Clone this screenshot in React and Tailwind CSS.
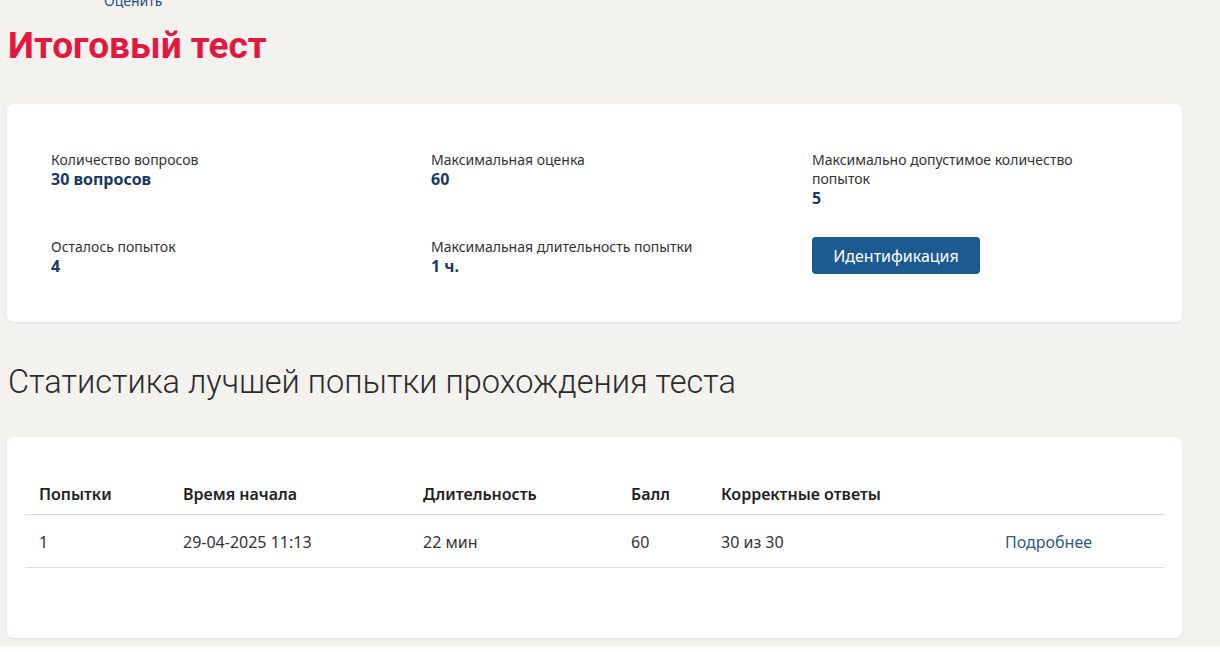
import React from "react";

const body = { fontFamily: '"Noto Sans", "Open Sans", sans-serif' };
const head = { fontFamily: 'Roboto, "Noto Sans", sans-serif' };

const info = [
  { label: "Количество вопросов", value: "30 вопросов" },
  { label: "Максимальная оценка", value: "60" },
  { label: "Максимально допустимое количество попыток", value: "5" },
  { label: "Осталось попыток", value: "4" },
  { label: "Максимальная длительность попытки", value: "1 ч." },
];

function Info({ label, value }) {
  return (
    <div>
      <div className="text-[14px] leading-[19px] text-[#333] max-w-[280px]">{label}</div>
      <div className="text-[16px] leading-[20px] font-bold text-[#173a63]">{value}</div>
    </div>
  );
}

export default function App() {
  return (
    <div className="min-h-[652px] bg-[#f3f2ef] pl-[7px] pr-[38px]" style={body}>
      <div className="pl-[97px] text-[14px] leading-[14px] text-[#1e4f80] -mt-[6px]">Оценить</div>

      <h1 className="mt-[16px] pl-[1px] text-[37px] leading-[44px] font-bold text-[#e4173e]" style={head}>
        Итоговый тест
      </h1>

      {/* Info card */}
      <section className="mt-[36px] bg-white rounded-md shadow-[0_1px_2px_rgba(0,0,0,0.08)] pl-[44px] pt-[46px] pb-[46px]">
        <div className="grid grid-cols-[380px_381px_1fr] gap-y-[29px]">
          <Info {...info[0]} />
          <Info {...info[1]} />
          <Info {...info[2]} />
          <Info {...info[3]} />
          <Info {...info[4]} />
          <div>
            <button className="h-[37px] w-[168px] rounded-[4px] bg-[#1d5a8f] text-white text-[16px]">
              Идентификация
            </button>
          </div>
        </div>
      </section>

      <h2 className="mt-[40px] pl-[1px] text-[32.5px] leading-[40px] font-light text-[#2b2b2b]" style={head}>
        Статистика лучшей попытки прохождения теста
      </h2>

      {/* Stats card */}
      <section className="mt-[35px] bg-white rounded-md shadow-[0_1px_2px_rgba(0,0,0,0.08)] px-[18px] pt-[35px] pb-[70px]">
        <table className="w-full text-left border-collapse text-[16px] text-[#333]">
          <thead>
            <tr className="border-b border-[#dcdcdc]">
              <th className="w-[144px] px-[14px] pt-[10px] pb-[8px] font-semibold text-[#222]">Попытки</th>
              <th className="w-[240px] px-[14px] pt-[10px] pb-[8px] font-semibold text-[#222]">Время начала</th>
              <th className="w-[208px] px-[14px] pt-[10px] pb-[8px] font-semibold text-[#222]">Длительность</th>
              <th className="w-[90px] px-[14px] pt-[10px] pb-[8px] font-semibold text-[#222]">Балл</th>
              <th className="w-[284px] px-[14px] pt-[10px] pb-[8px] font-semibold text-[#222]">Корректные ответы</th>
              <th className="px-[14px] pt-[10px] pb-[8px]"></th>
            </tr>
          </thead>
          <tbody>
            <tr className="border-b border-[#dcdcdc]">
              <td className="px-[14px] pt-[15px] pb-[13px]">1</td>
              <td className="px-[14px] pt-[15px] pb-[13px]">29-04-2025 11:13</td>
              <td className="px-[14px] pt-[15px] pb-[13px]">22 мин</td>
              <td className="px-[14px] pt-[15px] pb-[13px]">60</td>
              <td className="px-[14px] pt-[15px] pb-[13px]">30 из 30</td>
              <td className="px-[14px] pt-[15px] pb-[13px]">
                <a href="#" className="text-[#2d5a87]">Подробнее</a>
              </td>
            </tr>
          </tbody>
        </table>
      </section>
    </div>
  );
}
